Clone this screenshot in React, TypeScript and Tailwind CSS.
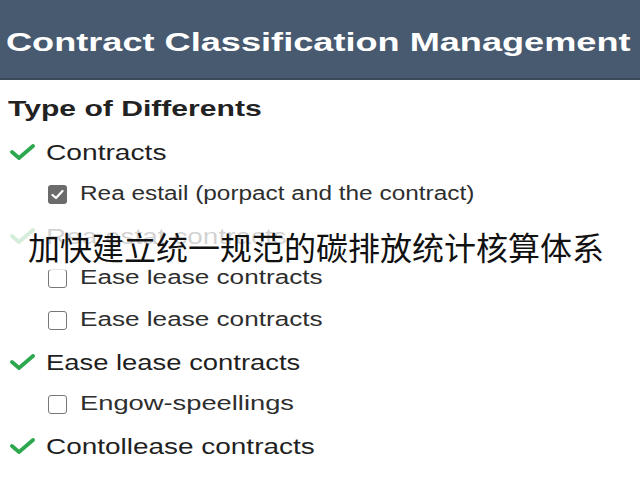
const font = { fontFamily: '"Liberation Sans", Arial, sans-serif' };

type Item = { kind: "check" | "box" | "boxed"; label: string; scale: string };

// the screenshot is stretched sideways, so each label gets its own horizontal scale
const items: Item[] = [
  { kind: "check", label: "Contracts", scale: "scale-x-[1.28]" },
  { kind: "boxed", label: "Rea estail (porpact and the contract)", scale: "scale-x-[1.25]" },
  { kind: "check", label: "Rea estat contracts", scale: "scale-x-[1.27]" },
  { kind: "box", label: "Ease lease contracts", scale: "scale-x-[1.34]" },
  { kind: "box", label: "Ease lease contracts", scale: "scale-x-[1.34]" },
  { kind: "check", label: "Ease lease contracts", scale: "scale-x-[1.245]" },
  { kind: "box", label: "Engow-speellings", scale: "scale-x-[1.4]" },
  { kind: "check", label: "Contollease contracts", scale: "scale-x-[1.27]" },
];

const GreenCheck = () => (
  <svg width="25" height="16" viewBox="0 0 25 16" className="shrink-0">
    <polyline points="2,8 9,14 23,2" fill="none" stroke="#2ea84f" strokeWidth="3.8" strokeLinecap="round" strokeLinejoin="round" />
  </svg>
);

const Box = ({ checked }: { checked: boolean }) =>
  checked ? (
    <div className="w-[19px] h-[19px] rounded-[3px] bg-[#6b6b6b] flex items-center justify-center shrink-0">
      <svg width="13" height="11" viewBox="0 0 13 11">
        <polyline points="1.5,6 5,9 11.5,2" fill="none" stroke="#fff" strokeWidth="2.2" strokeLinecap="round" strokeLinejoin="round" />
      </svg>
    </div>
  ) : (
    <div className="w-[19px] h-[19px] rounded-[3px] border-[1.5px] border-[#777] bg-white shrink-0" />
  );

const Row = ({ item }: { item: Item }) => {
  if (item.kind === "check") {
    return (
      <div className="h-[42px] flex items-center pl-[10px]">
        <GreenCheck />
        <span className={`ml-[11px] inline-block origin-left ${item.scale} text-[22px] text-[#1f1f1f] whitespace-nowrap`}>
          {item.label}
        </span>
      </div>
    );
  }
  return (
    <div className="h-[42px] flex items-center pl-[48px]">
      <Box checked={item.kind === "boxed"} />
      <span className={`ml-[13px] inline-block origin-left ${item.scale} text-[19.5px] text-[#2e2e2e] whitespace-nowrap`}>
        {item.label}
      </span>
    </div>
  );
};

export default function App() {
  return (
    <div className="w-[640px] h-[480px] bg-white relative overflow-hidden" style={font}>
      <div className="h-[80px] bg-[#485a6f] border-b-2 border-[#3b4858] flex items-center pl-[6px] pt-[6px]">
        <h1 className="inline-block origin-left scale-x-[1.39] text-[26px] font-bold text-white whitespace-nowrap">
          Contract Classification Management
        </h1>
      </div>
      <div className="pt-[14px]">
        <div className="h-[30px] pl-[8px] flex items-center">
          <h2 className="inline-block origin-left scale-x-[1.4] text-[21.5px] font-bold text-[#222] whitespace-nowrap">
            Type of Differents
          </h2>
        </div>
        <div className="mt-[7px]">
          {items.map((it, i) => (
            <Row key={i} item={it} />
          ))}
        </div>
      </div>
      <div
        className="absolute left-0 right-0 top-[222px] h-[48px] bg-white/80 flex items-center pl-[28px] text-[32px] text-[#111] whitespace-nowrap"
        style={{ fontFamily: '"Noto Sans CJK SC", sans-serif' }}
      >
        加快建立统一规范的碳排放统计核算体系
      </div>
    </div>
  );
}
